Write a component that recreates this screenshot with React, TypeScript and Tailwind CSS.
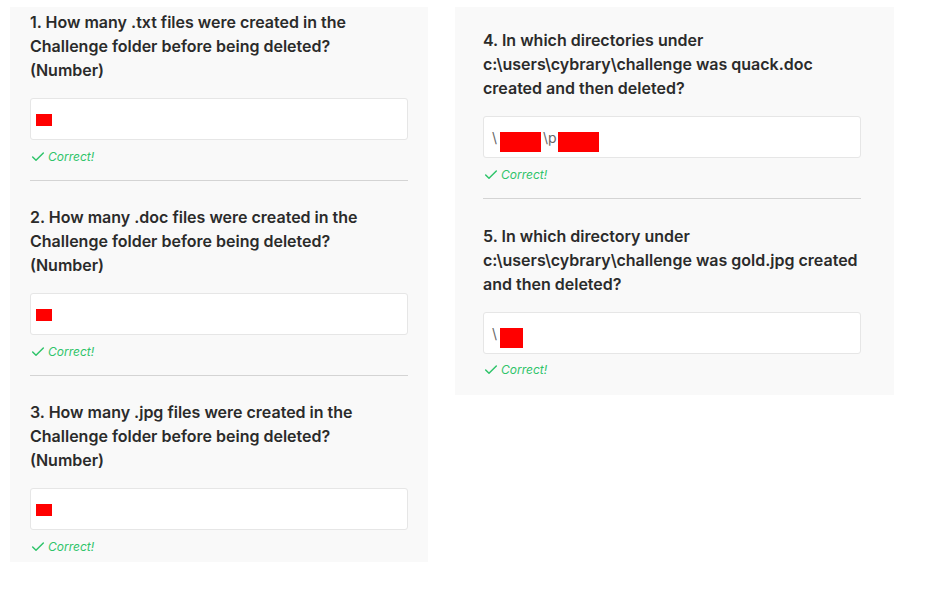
import React from "react";

const Check = () => (
  <svg width="16" height="16" viewBox="0 0 24 24" fill="none" stroke="#2fc46a" strokeWidth="2.2" strokeLinecap="round" strokeLinejoin="round">
    <polyline points="20 6 9 17 4 12" />
  </svg>
);

const Correct = ({ mt = "mt-[9px]" }: { mt?: string }) => (
  <div className={`${mt} flex h-4 items-center gap-[2px] text-[12px] italic leading-4 text-[#2fc46a]`}>
    <Check />
    <span>Correct!</span>
  </div>
);

const Red = ({ w, h, cls }: { w: string; h: string; cls?: string }) => (
  <span className={`inline-block bg-[#ff0000] ${w} ${h} ${cls ?? ""}`} />
);

const NumInput = () => (
  <div className="mt-4 flex h-[42px] w-[378px] items-center rounded-[3px] border border-[#e6e6e6] bg-white pl-[5px]">
    <span className="relative top-[1px] inline-block h-[12px] w-[16px] bg-[#ff0000]" />
  </div>
);

const Title = ({ children }: { children: React.ReactNode }) => (
  <div className="text-[16px] font-semibold leading-6 text-[#2b2b2b]">{children}</div>
);

const Divider = ({ gap }: { gap: string }) => <div className={`mt-[15px] h-px w-[378px] bg-[#d4d4d4] ${gap}`} />;

export default function App() {
  return (
    <div className="min-h-[607px] w-[929px] bg-white" style={{ fontFamily: "Inter, 'Noto Sans', sans-serif" }}>
      <div className="flex items-start gap-[27px] pl-[10px] pt-[7px]">
        <div className="w-[418px] bg-[#f9f9f9] px-5 pb-[7px] pt-[3px]">
          <Title>
            1. How many .txt files were created in the
            <br />
            Challenge folder before being deleted?
            <br />
            (Number)
          </Title>
          <NumInput />
          <Correct />
          <Divider gap="mb-6" />
          <Title>
            2. How many .doc files were created in the
            <br />
            Challenge folder before being deleted?
            <br />
            (Number)
          </Title>
          <NumInput />
          <Correct />
          <Divider gap="mb-6" />
          <Title>
            3. How many .jpg files were created in the
            <br />
            Challenge folder before being deleted?
            <br />
            (Number)
          </Title>
          <NumInput />
          <Correct />
        </div>
        <div className="w-[439px] bg-[#f9f9f9] pb-[17px] pl-[28px] pr-[32px] pt-[21px]">
          <Title>
            4. In which directories under
            <br />
            c:\users\cybrary\challenge was quack.doc
            <br />
            created and then deleted?
          </Title>
          <div className="mt-4 flex h-[42px] w-[378px] items-center rounded-[3px] border border-[#e6e6e6] bg-white pl-[8px] text-[14px] text-[#666]">
            <span>\</span>
            <Red w="w-[41px]" h="h-[20px]" cls="ml-[3px] relative top-[5px]" />
            <span className="ml-[2px]">\p</span>
            <Red w="w-[41px]" h="h-[20px]" cls="ml-[1px] relative top-[5px]" />
          </div>
          <Correct />
          <Divider gap="mb-[25px]" />
          <Title>
            5. In which directory under
            <br />
            c:\users\cybrary\challenge was gold.jpg created
            <br />
            and then deleted?
          </Title>
          <div className="mt-4 flex h-[42px] w-[378px] items-center rounded-[3px] border border-[#e6e6e6] bg-white pl-[8px] text-[14px] text-[#666]">
            <span>\</span>
            <Red w="w-[23px]" h="h-[20px]" cls="ml-[3px] relative top-[5px]" />
          </div>
          <Correct mt="mt-[8px]" />
        </div>
      </div>
    </div>
  );
}
